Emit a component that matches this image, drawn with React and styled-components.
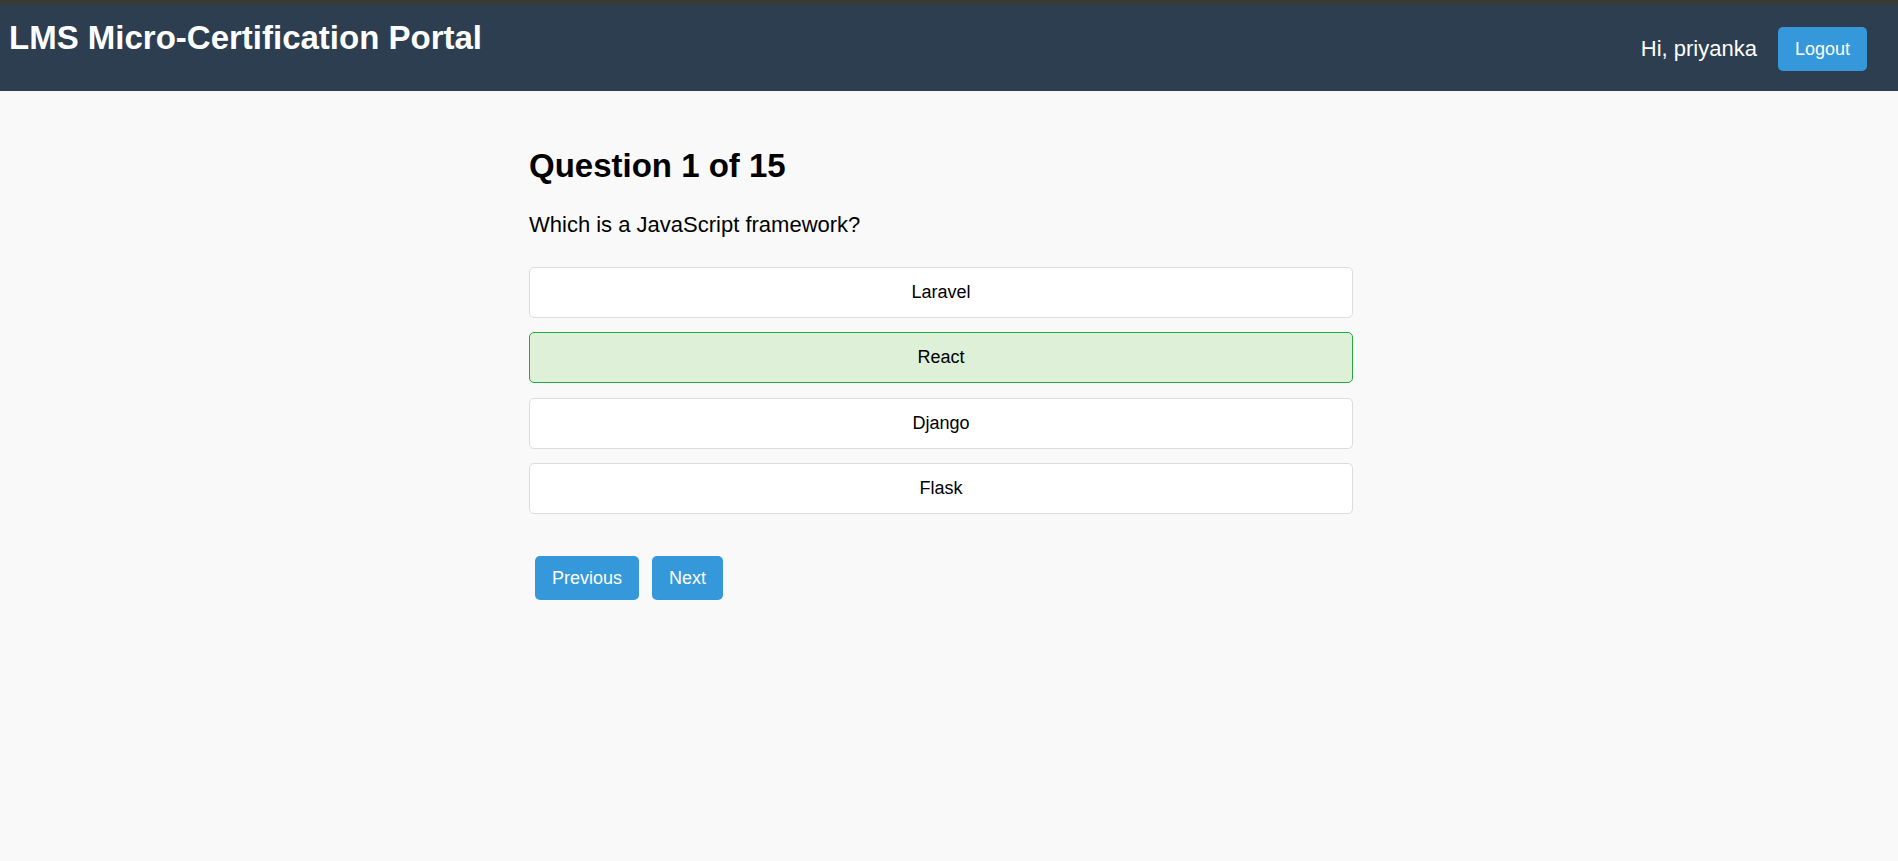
import React, { useState } from "react";
import styled, { createGlobalStyle } from "styled-components";

const GlobalStyle = createGlobalStyle`
  * { box-sizing: border-box; }
  body {
    margin: 0;
    background: #f9f9f9;
    font-family: "Liberation Sans", Arial, sans-serif;
    color: #000;
  }
`;

const Header = styled.header`
  display: flex;
  justify-content: space-between;
  align-items: center;
  height: 91px;
  padding: 0 31px 0 9px;
  background: #2c3e50;
  border-top: 5px solid #393c34;
  color: #fff;
`;

const Title = styled.h1`
  align-self: flex-start;
  margin: 13.6px 0 0;
  font-size: 33px;
  line-height: 38px;
  font-weight: 700;
`;

const UserArea = styled.div`
  display: flex;
  align-items: center;
  gap: 21px;
  margin-top: 2px;
`;

const Greeting = styled.span`
  font-size: 22px;
  line-height: 26px;
`;

const Button = styled.button`
  padding: 12px 17px;
  border: none;
  border-radius: 5px;
  background: #3498db;
  color: #fff;
  font-family: inherit;
  font-size: 18px;
  line-height: 20px;
  cursor: pointer;

  &:hover {
    background: #2d89c7;
  }
`;

const Main = styled.main`
  width: 840px;
  margin: 0 auto;
  padding: 55.5px 16px 0 0;
`;

const QuestionTitle = styled.h2`
  margin: 0;
  font-size: 33px;
  line-height: 38px;
  font-weight: 700;
`;

const QuestionText = styled.p`
  margin: 27px 0 29px;
  font-size: 22px;
  line-height: 26px;
`;

const Option = styled.button`
  display: block;
  width: 100%;
  margin-bottom: 14.5px;
  padding: 14px;
  border: 1px solid ${(p) => (p.$selected ? "#28a745" : "#dcdcdc")};
  border-radius: 5px;
  background: ${(p) => (p.$selected ? "#dff0d8" : "#fff")};
  color: #000;
  font-family: inherit;
  font-size: 18px;
  line-height: 21px;
  text-align: center;
  cursor: pointer;
`;

const Nav = styled.div`
  display: flex;
  gap: 13px;
  margin-top: 41.5px;
  padding-left: 6px;
`;

const options = ["Laravel", "React", "Django", "Flask"];

export default function App() {
  const [selected, setSelected] = useState("React");

  return (
    <>
      <GlobalStyle />
      <Header>
        <Title>LMS Micro-Certification Portal</Title>
        <UserArea>
          <Greeting>Hi, priyanka</Greeting>
          <Button>Logout</Button>
        </UserArea>
      </Header>
      <Main>
        <QuestionTitle>Question 1 of 15</QuestionTitle>
        <QuestionText>Which is a JavaScript framework?</QuestionText>
        {options.map((o) => (
          <Option key={o} $selected={selected === o} onClick={() => setSelected(o)}>
            {o}
          </Option>
        ))}
        <Nav>
          <Button>Previous</Button>
          <Button>Next</Button>
        </Nav>
      </Main>
    </>
  );
}
